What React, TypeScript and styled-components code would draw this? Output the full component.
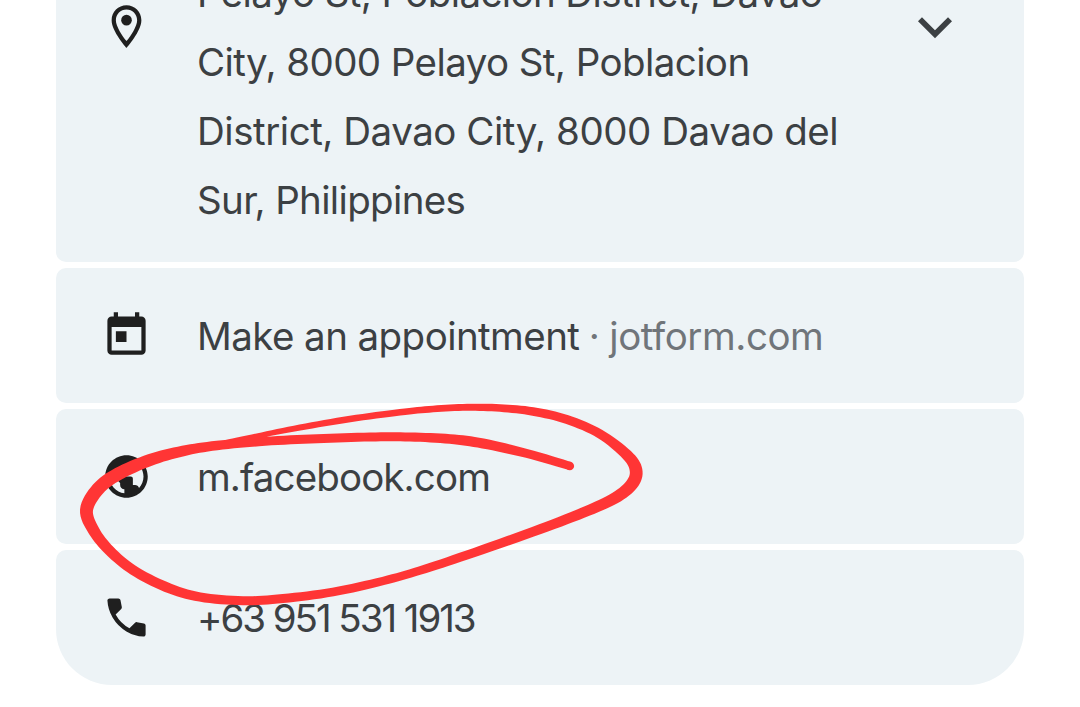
import type { ReactNode } from 'react';
import styled, { createGlobalStyle, css } from 'styled-components';

import { MdExpandMore, MdOutlineLocationOn, MdPublic, MdToday } from 'react-icons/md';

type InkPoint = [x: number, y: number, width: number];

interface ITextLine {
  text: string;
  spacing: number;
}

interface InfoRowProps {
  icon: ReactNode;
  last?: boolean;
  children: ReactNode;
}

const addressLines: ITextLine[] = [
  { text: 'Pelayo St, Poblacion District, Davao', spacing: -0.61 },
  { text: 'City, 8000 Pelayo St, Poblacion', spacing: -0.58 },
  { text: 'District, Davao City, 8000 Davao del', spacing: -0.47 },
  { text: 'Sur, Philippines', spacing: -0.66 },
];

// Pen stroke samples: centre of the nib and its width
const inkPoints: InkPoint[] = [
  [570, 466, 8.5],
  [527, 453.5, 9],
  [483, 443.5, 10],
  [450, 439, 9.7],
  [410, 437, 9],
  [370, 437, 9],
  [317, 438.7, 9],
  [265, 441.3, 9],
  [217, 445.5, 9.5],
  [183, 451, 10.5],
  [150, 460, 12],
  [118, 474, 13],
  [98, 489, 13.3],
  [86.5, 510, 13],
  [94, 531, 11.5],
  [110, 551, 10.5],
  [133, 570, 10],
  [166, 587, 10],
  [200, 597, 9.3],
  [243, 600.7, 9],
  [283, 598.5, 9],
  [333, 592, 8.7],
  [383, 581, 8.5],
  [420, 570.5, 8.5],
  [467, 555, 9],
  [533, 531.7, 9.7],
  [583, 512.7, 10.5],
  [615, 498, 11.5],
  [632, 484, 12.5],
  [636, 470, 12.7],
  [627, 455, 11],
  [600, 434, 9.3],
  [567, 419.5, 9],
  [533, 411.5, 8.5],
  [500, 408, 7.7],
  [467, 407.3, 7],
  [433, 409, 6.7],
  [400, 412.3, 6.5],
  [350, 419, 6.5],
  [300, 427.5, 6],
  [257, 435.9, 5],
  [223, 442.5, 4],
];

const catmull = (a: number, b: number, c: number, d: number, t: number) =>
  0.5 * (2 * b + (c - a) * t + (2 * a - 5 * b + 4 * c - d) * t * t + (3 * b - a - 3 * c + d) * t * t * t);

// Turns the samples into a closed outline with a varying thickness
const getInkPath = (points: InkPoint[]) => {
  const smooth: InkPoint[] = [];
  for (let i = 0; i < points.length - 1; i++) {
    const p0 = points[Math.max(i - 1, 0)];
    const p3 = points[Math.min(i + 2, points.length - 1)];
    for (let s = 0; s < 8; s++) {
      smooth.push([0, 1, 2].map((k) => catmull(p0[k], points[i][k], points[i + 1][k], p3[k], s / 8)) as InkPoint);
    }
  }
  smooth.push(points[points.length - 1]);

  const left: string[] = [];
  const right: string[] = [];
  smooth.forEach(([x, y, width], i) => {
    const prev = smooth[Math.max(i - 1, 0)];
    const next = smooth[Math.min(i + 1, smooth.length - 1)];
    const dx = next[0] - prev[0];
    const dy = next[1] - prev[1];
    const len = Math.hypot(dx, dy) || 1;
    const nx = (-dy / len) * (width / 2);
    const ny = (dx / len) * (width / 2);
    left.push(`${(x + nx).toFixed(2)} ${(y + ny).toFixed(2)}`);
    right.unshift(`${(x - nx).toFixed(2)} ${(y - ny).toFixed(2)}`);
  });
  return `M${[...left, ...right].join('L')}Z`;
};

const PhoneIcon = () => (
  <svg viewBox="0 0 24 24" fill="currentColor">
    <path d="M16.02 14.46l-2.62 2.62a16.14 16.14 0 0 1-6.5-6.5l2.62-2.62a.98.98 0 0 0 .27-.9L9.15 3.8c-.1-.46-.5-.8-.98-.8H4.02c-.56 0-1.03.47-1 1.03a17.92 17.92 0 0 0 2.43 8.01 18.08 18.08 0 0 0 6.5 6.5 17.92 17.92 0 0 0 8.01 2.43c.56.03 1.03-.44 1.03-1v-4.15c0-.48-.34-.89-.8-.98l-3.26-.65c-.33-.07-.67.04-.91.27z" />
  </svg>
);

const InfoRow = ({ icon, last, children }: InfoRowProps) => (
  <Row last={last}>
    <IconBox>{icon}</IconBox>
    <Label>{children}</Label>
  </Row>
);

const App = () => {
  return (
    <>
      <GlobalStyle />
      <Screen>
        <AddressRow>
          <IconBox>
            <MdOutlineLocationOn />
          </IconBox>
          <Address>
            {addressLines.map(({ text, spacing }) => (
              <AddressLine key={text} spacing={spacing}>
                {text}
              </AddressLine>
            ))}
          </Address>
          <ExpandButton aria-label="Expand">
            <MdExpandMore />
          </ExpandButton>
        </AddressRow>
        <InfoRow icon={<MdToday />}>
          <Run spacing={-0.57}>Make an appointment</Run>
          <Dot>·</Dot>
          <Run spacing={-0.45} muted>
            jotform.com
          </Run>
        </InfoRow>
        <InfoRow icon={<MdPublic />}>
          <Run spacing={-0.88}>m.facebook.com</Run>
        </InfoRow>
        <InfoRow icon={<PhoneIcon />} last>
          <Run spacing={-2.05}>+63 951 531 1913</Run>
        </InfoRow>
        <Ink viewBox="0 0 1080 707">
          <path d={getInkPath(inkPoints)} />
          <circle cx={569.8} cy={466} r={4.3} />
        </Ink>
      </Screen>
    </>
  );
};

export default App;

const GlobalStyle = createGlobalStyle`
  * {
    box-sizing: border-box;
  }
  body {
    margin: 0;
    background-color: #ffffff;
    font-family: Inter, 'Liberation Sans', sans-serif;
    overflow: hidden;
  }
`;

const Screen = styled.main`
  position: relative;
  display: flex;
  flex-direction: column;
  justify-content: flex-end;
  gap: 6px;
  height: 707px;
  padding: 0 56px 22px;
  overflow: hidden;
  color: #3c4043;
  font-size: 38.5px;
`;

const Row = styled.section<{ last?: boolean }>`
  display: flex;
  flex-shrink: 0;
  align-items: center;
  height: 135px;
  padding-left: 45px;
  border-radius: 10px;
  background-color: #edf3f6;
  ${({ last }) =>
    last &&
    css`
      border-bottom-left-radius: 56px;
      border-bottom-right-radius: 56px;
    `}
`;

const AddressRow = styled(Row)`
  align-items: flex-start;
  height: 304px;
  padding-top: 1px;
`;

const IconBox = styled.div`
  flex-shrink: 0;
  width: 51px;
  height: 51px;
  margin-right: 45px;
  color: #1f1f1f;
  svg {
    display: block;
    width: 51px;
    height: 51px;
  }
  ${AddressRow} & {
    margin-top: 42px;
  }
`;

const Address = styled.div`
  flex: 1;
`;

const AddressLine = styled.div<{ spacing: number }>`
  line-height: 69px;
  letter-spacing: ${({ spacing }) => spacing}px;
  white-space: nowrap;
`;

const ExpandButton = styled.button`
  margin: 34px 55px 0 0;
  padding: 0;
  border: 0;
  background-color: transparent;
  color: #3c4043;
  svg {
    display: block;
    width: 68px;
    height: 68px;
  }
`;

const Label = styled.div`
  display: flex;
  align-items: center;
  padding-top: 2px;
  line-height: 69px;
  white-space: nowrap;
`;

const Run = styled.span<{ spacing: number; muted?: boolean }>`
  letter-spacing: ${({ spacing }) => spacing}px;
  color: ${({ muted }) => (muted ? '#70757a' : 'inherit')};
`;

const Dot = styled.span`
  width: 30px;
  text-align: center;
  color: #70757a;
`;

const Ink = styled.svg`
  position: absolute;
  top: 0;
  left: 0;
  width: 1080px;
  height: 707px;
  fill: #ff3535;
  pointer-events: none;
`;
